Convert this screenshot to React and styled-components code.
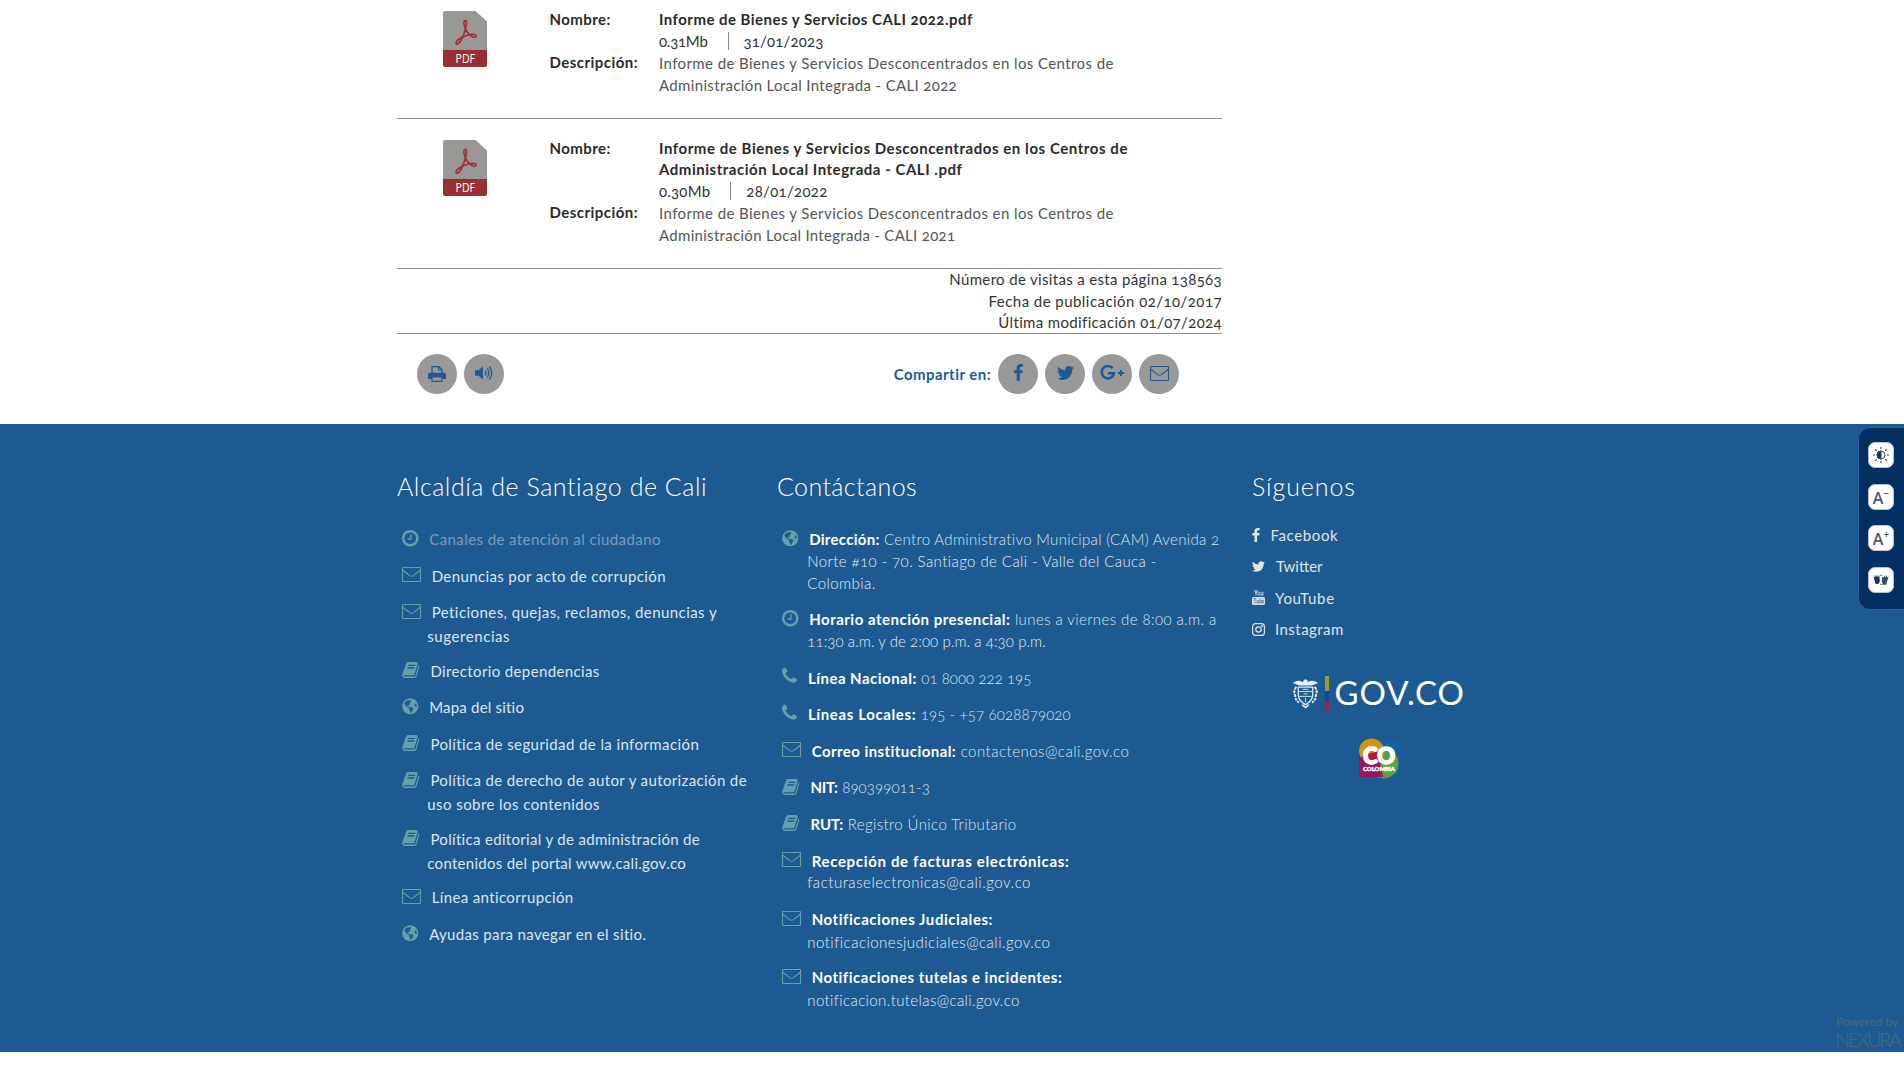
import React from "react";
import styled, { createGlobalStyle } from "styled-components";
import { FaGlobeAmericas } from "react-icons/fa";

const BLUE = "#1d5a92";
const TEAL = "#66a0ab";

const Global = createGlobalStyle`
  * { box-sizing: border-box; }
  body {
    margin: 0;
    background: #fff;
    font-family: Lato, "Open Sans", sans-serif;
    font-size: 15px;
    font-variant-numeric: oldstyle-nums;
    color: #333;
  }
`;

/* ---------- primitives ---------- */

const Text = styled.span`
  display: inline-block;
  white-space: nowrap;
  letter-spacing: ${(p) => p.$ls || 0}px;
`;
const Strong = styled(Text)`
  font-weight: 700;
`;

const Svg = styled.svg`
  display: block;
  flex: none;
  overflow: visible;
`;

/* ---------- documents ---------- */

const Page = styled.div`
  position: relative;
  min-height: 1065px;
`;
const Main = styled.main`
  width: 825px;
  height: 424px;
  margin-left: 397px;
`;
const DocRow = styled.article`
  display: grid;
  grid-template-columns: 106.5px 1fr;
  height: ${(p) => p.$h}px;
  padding: ${(p) => p.$top}px 0 0 46px;
  border-bottom: 1px solid #8f8f8f;
`;
const DocIcon = styled.div`
  padding-top: ${(p) => 11.4 - p.$offset}px;
`;
const Field = styled.div`
  display: grid;
  grid-template-columns: 109.5px 1fr;
`;
const Label = styled.div`
  line-height: ${(p) => p.$lh || 21.5}px;
  color: #2b2b2b;
`;
const Line = styled.div`
  display: flex;
  align-items: center;
  height: ${(p) => p.$lh || 21.5}px;
  line-height: ${(p) => p.$lh || 21.5}px;
  color: ${(p) => p.$color || "#333"};
`;
const Separator = styled.i`
  width: 1px;
  height: 18px;
  margin: 0 15px 0 20px;
  background: #888;
`;

const Stats = styled.div`
  height: 65px;
  border-bottom: 1px solid #8f8f8f;
`;
const StatLine = styled(Line)`
  justify-content: flex-end;
  height: 21.4px;
  line-height: 20.4px;
`;

const Tools = styled.div`
  display: flex;
  align-items: center;
  gap: 7px;
  padding: 20px 43px 0 20px;
`;
const ShareLabel = styled(Strong)`
  margin-left: auto;
  padding-bottom: 1px;
  color: ${BLUE};
`;
const Circle = styled.a`
  display: flex;
  align-items: center;
  justify-content: center;
  width: 40px;
  height: 40px;
  border-radius: 50%;
  background: #999;
  color: ${BLUE};
  padding-bottom: ${(p) => p.$lift || 1}px;
`;

/* ---------- footer ---------- */

const Footer = styled.footer`
  display: grid;
  grid-template-columns: 380px 475px 260px;
  height: 628px;
  padding: 48px 0 0 397px;
  background: ${BLUE};
  color: #fff;
`;
const Title = styled.h2`
  margin: 0;
  height: 29px;
  line-height: 29px;
  font-size: 25px;
  font-weight: 300;
`;
const List = styled.ul`
  margin: 27px 0 0;
  padding: 0;
  list-style: none;
`;
const Item = styled.li`
  padding-bottom: 13.8px;
`;
const FirstLine = styled.div`
  display: flex;
  align-items: center;
  height: 22.8px;
  padding-left: 5px;
  line-height: 22.8px;
  font-weight: ${(p) => p.$weight || 400};
  color: ${(p) => p.$color || "#dde6ec"};
  gap: 4.5px;
`;
const NextLine = styled.div`
  height: 21.8px;
  line-height: ${(p) => p.$lh || 21.8}px;
  padding-left: 30.3px;
  font-weight: ${(p) => p.$weight || 400};
  color: ${(p) => (p.$weight ? "#e9eff2" : "#dde6ec")};
`;
const IconBox = styled.span`
  display: flex;
  margin: 0 ${(p) => 6.2 + (p.$extra || 0)}px 2.4px 0;
  color: ${TEAL};
`;
const White = styled(Strong)`
  color: #fff;
`;

const Social = styled.div`
  display: flex;
  align-items: center;
  height: 31.4px;
  gap: ${(p) => p.$gap}px;
  color: #e2e5dd;
`;
const SocialList = styled.div`
  margin-top: 18.3px;
`;
const GovLogo = styled.div`
  display: flex;
  align-items: center;
  gap: 6px;
  margin: 31px 0 0 39.5px;
`;
const Flag = styled.span`
  width: 4px;
  height: 35px;
  background: linear-gradient(#a39a26 0 43%, #1b3fa0 43% 70%, #a41f4b 70%);
`;
const GovName = styled(Text)`
  height: 35px;
  line-height: 33px;
  font-size: 33px;
  color: #fff;
`;
const Brand = styled.div`
  margin: 27px 0 0 107px;
`;

/* ---------- overlays ---------- */

const Access = styled.aside`
  position: absolute;
  top: 427px;
  right: 0;
  display: flex;
  flex-direction: column;
  gap: 15.7px;
  width: 46px;
  height: 183px;
  padding: 14px 0 0 9px;
  border: 1px solid #2a6095;
  border-right: 0;
  border-radius: 12px 0 0 12px;
  background: #042f62;
`;
const AccessButton = styled.button`
  display: flex;
  align-items: center;
  justify-content: center;
  width: 26px;
  height: 26px;
  padding: 0;
  border: 1px solid #b9c3cf;
  border-radius: 7px;
  background: #fff;
  color: #37475c;
`;
const Powered = styled.div`
  position: absolute;
  top: 1014px;
  right: 3px;
  width: 66px;
  color: #4c6a78;
  line-height: 16.5px;
`;
const PoweredBy = styled(Text)`
  display: block;
  padding-left: 1px;
  font-size: 12px;
`;
const Nexura = styled(Text)`
  display: block;
  font-size: 20px;
  font-weight: 300;
`;

/* ---------- drawings ---------- */

const FA = {
  clock: "M1024 544v448q0 14-9 23t-23 9h-320q-14 0-23-9t-9-23v-64q0-14 9-23t23-9h224v-352q0-14 9-23t23-9h64q14 0 23 9t9 23zm416 352q0-148-73-273t-198-198-273-73-273 73-198 198-73 273 73 273 198 198 273 73 273-73 198-198 73-273zm224 0q0 209-103 385.5t-279.5 279.5-385.5 103-385.5-103-279.5-279.5-103-385.5 103-385.5 279.5-279.5 385.5-103 385.5 103 279.5 279.5 103 385.5z",
  book: "M1703 478q40 57 18 129l-275 906q-19 64-76.5 107.5t-122.5 43.5h-923q-77 0-148.5-53.5t-99.5-131.5q-24-67-2-127 0-4 3-27t4-37q1-8-3-21.5t-3-19.5q2-11 8-21t16.5-23.5 16.5-23.5q23-38 45-91.5t30-91.5q3-10 .5-30t-.5-28q3-11 17-28t17-23q21-36 42-92t25-90q1-9-2.5-32t.5-28q4-13 22-30.5t22-22.5q19-26 42.5-84.5t27.5-96.5q1-8-3-25.5t-2-26.5q2-8 9-18t18-23 17-21q8-12 16.5-30.5t15-35 16-36 19.5-32 26.5-23.5 36-11.5 47.5 5.5l-1 3q38-9 51-9h761q74 0 114 56t18 130l-274 906q-36 119-71.5 153.5t-128.5 34.5h-869q-27 0-38 15-11 16-1 43 24 70 144 70h923q29 0 56-15.5t35-41.5l300-987q7-22 5-57 38 15 59 43zm-1064 2q-4 13 2 22.5t20 9.5h608q13 0 25.5-9.5t16.5-22.5l21-64q4-13-2-22.5t-20-9.5h-608q-13 0-25.5 9.5t-16.5 22.5zm-83 256q-4 13 2 22.5t20 9.5h608q13 0 25.5-9.5t16.5-22.5l21-64q4-13-2-22.5t-20-9.5h-608q-13 0-25.5 9.5t-16.5 22.5z",
  phone: "M1600 1240q0 27-10 70.5t-21 68.5q-21 50-122 106-94 51-186 51-27 0-53-3.5t-57.5-12.5-47-14.5-55.5-20.5-49-18q-98-35-175-83-127-79-264-216t-216-264q-48-77-83-175-3-9-18-49t-20.5-55.5-14.5-47-12.5-57.5-3.5-53q0-92 51-186 56-101 106-122 25-11 68.5-21t70.5-10q14 0 21 3 18 6 53 76 11 19 30 54t35 63.5 31 53.5q3 4 17.5 25t21.5 35.5 7 28.5q0 20-28.5 50t-62 55-62 53-28.5 46q0 9 5 22.5t8.5 20.5 14 24 11.5 19q76 137 174 235t235 174q2 1 19 11.5t24 14 20.5 8.5 22.5 5q18 0 46-28.5t53-62 55-62 50-28.5q14 0 28.5 7t35.5 21.5 25 17.5q25 15 53.5 31t63.5 35 54 30q70 35 76 53 3 7 3 21z",
  twitter: "M1684 408q-67 98-162 167 1 14 1 42 0 130-38 259.5t-115.5 248.5-184.5 210.5-258 146-323 54.5q-271 0-496-145 35 4 78 4 225 0 401-138-105-2-188-64.5t-114-159.5q33 5 61 5 43 0 85-11-112-23-185.5-111.5t-73.5-205.5v-4q68 38 146 41-66-44-105-115t-39-154q0-88 44-163 121 149 294.5 238.5t371.5 99.5q-8-38-8-74 0-134 94.5-228.5t228.5-94.5q140 0 236 102 109-21 205-78-37 115-142 178 93-10 186-50z",
  facebook: "M1343 12v264h-157q-86 0-116 36t-30 108v189h293l-39 296h-254v759h-306v-759h-255v-296h255v-218q0-186 104-288.5t277-102.5q147 0 228 12z",
};
const BOX = {
  clock: "128 128 1536 1536",
  book: "60 120 1672 1550",
  phone: "192 256 1408 1408",
  twitter: "108 256 1576 1280",
  facebook: "479 0 864 1664",
};
const Glyph = ({ name, w, h }) => (
  <Svg width={w} height={h} viewBox={BOX[name]} fill="currentColor">
    <path d={FA[name]} />
  </Svg>
);

const Envelope = ({ w = 19, h = 15 }) => (
  <Svg width={w} height={h} viewBox="0 0 19 15" fill="none" stroke="currentColor" strokeWidth="1.1">
    <rect x=".5" y=".5" width="18" height="14" rx=".6" />
    <path d="M.8 3.2 7.6 8.6Q9.5 10 11.4 8.6L18.2 3.2" />
  </Svg>
);

const PdfFile = () => (
  <Svg width="44" height="56" viewBox="0 0 44 56">
    <path d="M2 0H32.5L44 10.5V39H0V2Q0 0 2 0Z" fill="#989895" />
    <path d="M0 39H44V54Q44 56 42 56H2Q0 56 0 54Z" fill="#9a2f32" />
    <g fill="none" stroke="#a92c35" strokeWidth="1.7" strokeLinejoin="round">
      <path d="M22.3 9.3C20.6 9.3 20.7 12.4 21.3 14.5C22.6 19.5 26 24 30 26C33 27 34 25 32.6 24C29.5 22.4 20 24.7 15.5 28.5C12.5 31 12.3 33.6 14.4 33.2C18 32 21.5 22.5 23.1 15C23.8 12 23.8 9.4 22.3 9.3Z" />
    </g>
    <text x="22.3" y="51.9" textAnchor="middle" textLength="19.5" lengthAdjust="spacingAndGlyphs" fontFamily="'Open Sans', sans-serif" fontSize="12.5" fontWeight="500" fill="#fff">PDF</text>
  </Svg>
);

const Printer = () => (
  <Svg width="18" height="16" viewBox="0 0 18 16">
    <path d="M4 7V.7H11L14 3.7V7" fill="none" stroke="currentColor" strokeWidth="1.3" />
    <path d="M10.6.7V4H14" fill="none" stroke="currentColor" strokeWidth="1.1" />
    <path d="M1.8 6.8H16.2Q18 6.8 18 8.6V13H0V8.6Q0 6.8 1.8 6.8Z" fill="currentColor" />
    <path d="M4 11H14V15.3H4Z" fill="#999" stroke="currentColor" strokeWidth="1.2" />
  </Svg>
);

const Volume = () => (
  <Svg width="18" height="14" viewBox="0 0 18 14">
    <path d="M0 4.2H3.6L8 .2V13.8L3.6 9.8H0Z" fill="currentColor" />
    <path d="M10.2 4.6Q12 7 10.2 9.4M12.2 2.5Q15.5 7 12.2 11.5M14.3.5Q19.2 7 14.3 13.5" fill="none" stroke="currentColor" strokeWidth="1.3" />
  </Svg>
);

const GooglePlus = () => (
  <Svg width="24" height="16" viewBox="0 0 24 16" fill="none" stroke="currentColor">
    <path d="M12.6 3.1A6.2 6.2 0 1 0 14 8.2H8" strokeWidth="2.6" />
    <path d="M20.9 5V11M17.9 8H23.9" strokeWidth="2" />
  </Svg>
);

const YouTube = () => (
  <Svg width="13" height="15" viewBox="0 0 13 15">
    <path d="M2.6 0 4 3.2V5.6M5.4 0 4 3.2" fill="none" stroke="#c9c9c4" strokeWidth="1.1" />
    <rect x="5.9" y="2" width="1.8" height="3.4" rx=".9" fill="none" stroke="#c9c9c4" />
    <path d="M9.2 1.8V5.3H11V1.8" fill="none" stroke="#c9c9c4" />
    <rect x="0" y="7" width="13" height="8" rx="1.6" fill="#dcdcd6" />
    <path d="M1.6 8.7H4.2M2.9 8.7V13.4M5 10V13H6.6V10M8 8.6V13H9.3V10.2H8M12 11.6H10.6V10.2H12M10.6 11.6V13H12" fill="none" stroke="#3a6c9c" strokeWidth=".7" />
  </Svg>
);

const Instagram = () => (
  <Svg width="13" height="13" viewBox="0 0 13 13" fill="none" stroke="#e6e6e0" strokeWidth="1.2">
    <rect x=".6" y=".6" width="11.8" height="11.8" rx="3" />
    <circle cx="6.5" cy="6.5" r="2.7" />
    <circle cx="10" cy="3" r=".4" />
  </Svg>
);

const CoatOfArms = () => (
  <Svg width="27" height="30" viewBox="0 0 28 31" fill="none" stroke="#e8eef4" strokeWidth="1.3">
    <path d="M.5 5.5C4 2.5 7.5 2 11 4.3Q12.5 1 14.6 1.4Q16.5 1.6 16.5 4.3C20 2 24 2.5 27.5 5.5C24.5 5.6 23 7.4 20 7.8H8C5 7.4 3.5 5.6.5 5.5Z" fill="#e8eef4" stroke="none" />
    <path d="M6.5 9.5H21.5V18Q20.5 24.5 14 27.5Q7.5 24.5 6.5 18Z" />
    <path d="M7 14H21M7.5 19H20.5M11 11.7H17M12 16.5H16M14 20.5V25" strokeWidth=".9" />
    <path d="M4.4 9Q1 14 3.3 18Q3.5 23 7.2 25.5M23.6 9Q27 14 24.7 18Q24.5 23 20.8 25.5" strokeDasharray="3 1" strokeWidth="2" />
    <path d="M10.5 27.5 14 30.5 17.5 27.5" strokeWidth="1.6" />
  </Svg>
);

const ColombiaBrand = () => (
  <Svg width="40" height="41" viewBox="0 0 40 41">
    <path d="M12 3H37Q40 3 40 7V34Q40 40 34 40H12Z" fill="#0f659b" />
    <circle cx="24.5" cy="25.5" r="15" fill="#5c9e42" />
    <path d="M0 39V13H16Q22 26 24 39Z" fill="#97155b" />
    <circle cx="12.5" cy="13" r="12.5" fill="#d3930f" />
    <path d="M1.5 19Q6 27 14 26H24L20 13Q11 15 1.5 19Z" fill="#a51c41" />
    <text x="4" y="26" textLength="32" lengthAdjust="spacingAndGlyphs" fontFamily="Lato, sans-serif" fontWeight="900" fontSize="23" fill="#fff" stroke="#fff" strokeWidth="1.6">CO</text>
    <text x="4" y="33.2" textLength="32" lengthAdjust="spacingAndGlyphs" fontFamily="Lato, sans-serif" fontWeight="900" fontSize="6" fill="#fff" stroke="#fff" strokeWidth=".4">COLOMBIA</text>
  </Svg>
);

const Contrast = () => (
  <Svg width="16" height="16" viewBox="0 0 16 16" fill="none" stroke="currentColor">
    <path d="M8 0V2M8 14V16M0 8H2M14 8H16M2.3 2.3 3.8 3.8M12.2 12.2 13.7 13.7M2.3 13.7 3.8 12.2M12.2 3.8 13.7 2.3" strokeWidth="1.1" />
    <circle cx="8" cy="8" r="4" fill="#fff" />
    <path d="M8 4A4 4 0 0 0 8 12Z" fill="#12335e" />
  </Svg>
);

const LetterSize = styled.span`
  display: flex;
  align-items: flex-start;
  padding-top: 2px;
  font: 600 16px/18px "Open Sans", sans-serif;
  color: #4f5a69;
`;
const Sign = styled.sup`
  font-size: 10px;
  line-height: 8px;
  vertical-align: baseline;
`;

const Hands = () => (
  <Svg width="16" height="12" viewBox="0 0 16 12">
    <path d="M.4 2.5 1.6 3.6 1.8.8 3.1 3.2 4 .6 4.8 3.2 6.4 1.6 6.8 7.6 5.2 10H2.6Z" fill="#143660" />
    <path d="M15.6 2.3 14.2 3.6 13.8.8 12.6 3.4 11.6 1 11 3.6 9 2.8 8.8 8 10.4 10.8H13.2Z" fill="#31506f" />
    <path d="M6.5 1.4H9.5M7 10.4H10" stroke="#9a9a78" strokeWidth="1.2" />
  </Svg>
);

const ICONS = {
  clock: <Glyph name="clock" w={16.5} h={16.5} />,
  book: <Glyph name="book" w={17.5} h={16} />,
  phone: <Glyph name="phone" w={15} h={15} />,
  mail: <Envelope />,
  globe: <FaGlobeAmericas size={16.5} />,
};
const EXTRA = { phone: 0.2, book: 0.2 };

/* ---------- content ---------- */

const DOCS = [
  {
    height: 119, top: 9,
    names: [["Informe de Bienes y Servicios CALI 2022.pdf", 0.47]],
    size: ["0.31Mb", -0.25], date: ["31/01/2023", 0.15],
    desc: [["Informe de Bienes y Servicios Desconcentrados en los Centros de", 0.41], ["Administración Local Integrada - CALI 2022", 0.34]],
  },
  {
    height: 150, top: 18.6,
    names: [["Informe de Bienes y Servicios Desconcentrados en los Centros de", 0.56], ["Administración Local Integrada - CALI .pdf", 0.53]],
    size: ["0.30Mb", 0.2], date: ["28/01/2022", 0.3],
    desc: [["Informe de Bienes y Servicios Desconcentrados en los Centros de", 0.41], ["Administración Local Integrada - CALI 2021", 0.3]],
  },
];

const STATS = [
  ["Número de visitas a esta página 138563", 0.34],
  ["Fecha de publicación 02/10/2017", 0.45],
  ["Última modificación 01/07/2024", 0.35],
];

const LINKS = [
  { icon: "clock", lines: [["Canales de atención al ciudadano", 0.42]], color: "#7e9bbd" },
  { icon: "mail", lines: [["Denuncias por acto de corrupción", 0.38]] },
  { icon: "mail", lines: [["Peticiones, quejas, reclamos, denuncias y", 0.44], ["sugerencias", 0.57]] },
  { icon: "book", lines: [["Directorio dependencias", 0.37]] },
  { icon: "globe", lines: [["Mapa del sitio", 0.2]] },
  { icon: "book", lines: [["Política de seguridad de la información", 0.41]] },
  { icon: "book", lines: [["Política de derecho de autor y autorización de", 0.37], ["uso sobre los contenidos", 0.43]] },
  { icon: "book", lines: [["Política editorial y de administración de", 0.32], ["contenidos del portal www.cali.gov.co", 0.28]] },
  { icon: "mail", lines: [["Línea anticorrupción", 0.37]] },
  { icon: "globe", lines: [["Ayudas para navegar en el sitio.", 0.34]] },
];

const CONTACTS = [
  { icon: "globe", label: ["Dirección:", 0.28], lines: [["Centro Administrativo Municipal (CAM) Avenida 2", 0.33], ["Norte #10 - 70. Santiago de Cali - Valle del Cauca -", 0.42], ["Colombia.", 0.43]] },
  { icon: "clock", label: ["Horario atención presencial:", 0.5], lines: [["lunes a viernes de 8:00 a.m. a", 0.41], ["11:30 a.m. y de 2:00 p.m. a 4:30 p.m.", 0.08]] },
  { icon: "phone", label: ["Línea Nacional:", 0.48], lines: [["01 8000 222 195", 0.05]] },
  { icon: "phone", label: ["Líneas Locales:", 0.62], lines: [["195 - +57 6028879020", 0.14]] },
  { icon: "mail", label: ["Correo institucional:", 0.44], lines: [["contactenos@cali.gov.co", 0.49]] },
  { icon: "book", label: ["NIT:", -0.2], lines: [["890399011-3", 0.1]] },
  { icon: "book", label: ["RUT:", 0], lines: [["Registro Único Tributario", 0.4]] },
  { icon: "mail", label: ["Recepción de facturas electrónicas:", 0.67], lines: [null, ["facturaselectronicas@cali.gov.co", 0.53]] },
  { icon: "mail", step: 23.4, label: ["Notificaciones Judiciales:", 0.55], lines: [null, ["notificacionesjudiciales@cali.gov.co", 0.48]] },
  { icon: "mail", step: 23.4, label: ["Notificaciones tutelas e incidentes:", 0.5], lines: [null, ["notificacion.tutelas@cali.gov.co", 0.39]] },
];

const Entry = ({ icon, label, lines, color, weight, step }) => (
  <Item>
    <FirstLine $color={color} $weight={weight}>
      <IconBox $extra={EXTRA[icon]}>{ICONS[icon]}</IconBox>
      {label && <White $ls={label[1]}>{label[0]}</White>}
      {lines[0] && <Text $ls={lines[0][1]}>{lines[0][0]}</Text>}
    </FirstLine>
    {lines.slice(1).map(([t, ls]) => (
      <NextLine key={t} $weight={weight} $lh={step}><Text $ls={ls}>{t}</Text></NextLine>
    ))}
  </Item>
);

const Document = ({ doc }) => (
  <DocRow $h={doc.height} $top={doc.top}>
    <DocIcon $offset={doc.height === 119 ? doc.top : doc.top - 9.8}><PdfFile /></DocIcon>
    <div>
      <Field>
        <Label><Strong $ls={0.42}>Nombre:</Strong></Label>
        <div>
          {doc.names.map(([t, ls]) => (
            <Line key={t} $color="#2b2b2b"><Strong $ls={ls}>{t}</Strong></Line>
          ))}
          <Line>
            <Text $ls={doc.size[1]}>{doc.size[0]}</Text>
            <Separator />
            <Text $ls={doc.date[1]}>{doc.date[0]}</Text>
          </Line>
        </div>
      </Field>
      <Field>
        <Label $lh={20.2}><Strong $ls={0.46}>Descripción:</Strong></Label>
        <div>
          {doc.desc.map(([t, ls]) => (
            <Line key={t} $lh={22.4} $color="#555"><Text $ls={ls}>{t}</Text></Line>
          ))}
        </div>
      </Field>
    </div>
  </DocRow>
);

export default function App() {
  return (
    <Page>
      <Global />
      <Main>
        {DOCS.map((d) => <Document key={d.height} doc={d} />)}
        <Stats>
          {STATS.map(([t, ls]) => <StatLine key={t}><Text $ls={ls}>{t}</Text></StatLine>)}
        </Stats>
        <Tools>
          <Circle><Printer /></Circle>
          <Circle $lift={2}><Volume /></Circle>
          <ShareLabel $ls={0.46}>Compartir en:</ShareLabel>
          <Circle $lift={3}><Glyph name="facebook" w={9} h={17} /></Circle>
          <Circle $lift={2}><Glyph name="twitter" w={17} h={14} /></Circle>
          <Circle $lift={2}><GooglePlus /></Circle>
          <Circle $lift={2}><Envelope w={19} h={15} /></Circle>
        </Tools>
      </Main>

      <Footer>
        <section>
          <Title><Text $ls={0.53}>Alcaldía de Santiago de Cali</Text></Title>
          <List>{LINKS.map((l) => <Entry key={l.lines[0][0]} step={24} {...l} />)}</List>
        </section>
        <section>
          <Title><Text $ls={0.4}>Contáctanos</Text></Title>
          <List>{CONTACTS.map((c) => <Entry key={c.label[0]} weight={300} {...c} />)}</List>
        </section>
        <section>
          <Title><Text $ls={0.9}>Síguenos</Text></Title>
          <SocialList>
            <Social $gap={10.5}><Glyph name="facebook" w={8} h={14} /><Text $ls={0.62}>Facebook</Text></Social>
            <Social $gap={11}><Glyph name="twitter" w={13} h={11} /><Text $ls={0}>Twitter</Text></Social>
            <Social $gap={10}><YouTube /><Text $ls={0.7}>YouTube</Text></Social>
            <Social $gap={10}><Instagram /><Text $ls={0.45}>Instagram</Text></Social>
          </SocialList>
          <GovLogo>
            <CoatOfArms />
            <Flag />
            <GovName $ls={0.9}>GOV.CO</GovName>
          </GovLogo>
          <Brand><ColombiaBrand /></Brand>
        </section>
      </Footer>

      <Access>
        <AccessButton><Contrast /></AccessButton>
        <AccessButton><LetterSize>A<Sign>−</Sign></LetterSize></AccessButton>
        <AccessButton><LetterSize>A<Sign>+</Sign></LetterSize></AccessButton>
        <AccessButton><Hands /></AccessButton>
      </Access>
      <Powered>
        <PoweredBy $ls={0}>Powered by</PoweredBy>
        <Nexura $ls={-2.4}>NEXURA</Nexura>
      </Powered>
    </Page>
  );
}
